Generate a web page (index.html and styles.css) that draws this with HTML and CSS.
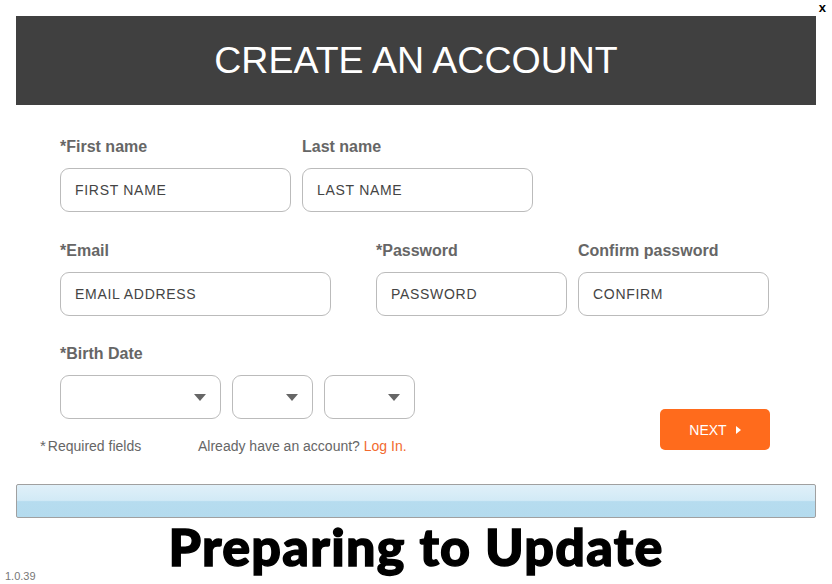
FILE: index.html
```html
<!DOCTYPE html>
<html lang="en">
  <head>
    <meta charset="UTF-8" />
    <title>Create an account</title>
    <link rel="stylesheet" href="styles.css">
  </head>
  <body>
    <div class="topbar"><span class="close">x</span></div>
    <header class="header">
      <h1>CREATE AN ACCOUNT</h1>
    </header>

    <div class="form">
      <div class="row">
        <div class="field w231">
          <label><span class="star">*</span>First name</label>
          <input type="text" placeholder="FIRST NAME" />
        </div>
        <div class="field w231">
          <label>Last name</label>
          <input type="text" placeholder="LAST NAME" />
        </div>
      </div>

      <div class="row row-tight">
        <div class="field w271 gap-right">
          <label><span class="star">*</span>Email</label>
          <input type="text" placeholder="EMAIL ADDRESS" />
        </div>
        <div class="field w191">
          <label><span class="star">*</span>Password</label>
          <input type="password" placeholder="PASSWORD" />
        </div>
        <div class="field w191">
          <label>Confirm password</label>
          <input type="password" placeholder="CONFIRM" />
        </div>
      </div>

      <div class="bottom">
        <div class="left">
          <div class="field">
            <label><span class="star">*</span>Birth Date</label>
            <div class="selects">
              <div class="select w161"><span class="arrow"></span></div>
              <div class="select w81"><span class="arrow"></span></div>
              <div class="select w91"><span class="arrow"></span></div>
            </div>
          </div>
          <div class="notes">
            <span class="required"><span class="star">*</span>Required fields</span>
            <span>Already have an account? <a href="#" class="login">Log In.</a></span>
          </div>
        </div>
        <button class="next">NEXT <span class="next-arrow"></span></button>
      </div>
    </div>

    <div class="progress"></div>

    <div class="status">
      <span class="version">1.0.39</span>
      <h2>Preparing to Update</h2>
      <span></span>
    </div>
  </body>
</html>
```

FILE: styles.css
```css
body {
  margin: 0;
  width: 832px;
  height: 584px;
  background-color: #fff;
  font-family: "Liberation Sans", Arial, sans-serif;
  overflow: hidden;
}
.topbar {
  height: 16px;
  display: flex;
  justify-content: flex-end;
  padding-right: 6px;
}
.close {
  font-weight: bold;
  font-size: 13px;
  line-height: 16px;
  color: #000;
}
.header {
  margin: 0 16px;
  height: 89px;
  background-color: #404040;
  display: flex;
  align-items: center;
  justify-content: center;
}
.header h1 {
  margin: 0;
  color: #fff;
  font-weight: normal;
  font-size: 37.5px;
  padding-bottom: 1px;
}

.form {
  padding: 32px 0 0 60px;
  width: 710px;
}
.row {
  display: flex;
  gap: 11px;
  margin-bottom: 29px;
}
.row-tight {
  margin-bottom: 28px;
}
.field {
  display: flex;
  flex-direction: column;
}
.field label {
  font-size: 16px;
  font-weight: bold;
  color: #666;
  line-height: 20px;
  margin-bottom: 11px;
}
.star {
  color: #666;
}
.field input {
  box-sizing: border-box;
  height: 44px;
  border: 1px solid #bbb;
  border-radius: 9px;
  padding: 0 14px;
  font-family: "Liberation Sans", Arial, sans-serif;
  font-size: 14px;
  letter-spacing: 0.7px;
  color: #444;
  outline: none;
}
.field input::placeholder {
  color: #444;
  opacity: 1;
}
.w231 { width: 231px; }
.w271 { width: 271px; }
.w191 { width: 191px; }
.w161 { width: 161px; }
.w81 { width: 81px; }
.w91 { width: 91px; }
.gap-right {
  margin-right: 34px;
}

.bottom {
  display: flex;
  justify-content: space-between;
  align-items: flex-end;
}
.selects {
  display: flex;
  gap: 11px;
}
.select {
  box-sizing: border-box;
  height: 44px;
  border: 1px solid #bbb;
  border-radius: 9px;
  display: flex;
  align-items: center;
  justify-content: flex-end;
  padding-right: 14px;
}
.arrow {
  width: 0;
  height: 0;
  border-left: 6px solid transparent;
  border-right: 6px solid transparent;
  border-top: 7px solid #666;
}
.notes {
  margin: 19px 0 0 -20px;
  font-size: 14px;
  line-height: 16px;
  color: #666;
  display: flex;
}
.notes .star {
  margin-right: 2px;
  font-size: 15px;
}
.required {
  width: 158px;
}
.login {
  color: #f26a2e;
  text-decoration: none;
}
.next {
  width: 110px;
  height: 41px;
  margin-bottom: 4px;
  border: none;
  border-radius: 5px;
  background-color: #ff6b1c;
  color: #fff;
  font-family: "Liberation Sans", Arial, sans-serif;
  font-size: 14px;
  display: flex;
  align-items: center;
  justify-content: center;
  gap: 9px;
  padding: 0;
}
.next-arrow {
  width: 0;
  height: 0;
  border-top: 4.5px solid transparent;
  border-bottom: 4.5px solid transparent;
  border-left: 5px solid #fff;
}

.progress {
  margin: 30px 16px 0;
  height: 32px;
  border: 1px solid #a0a0a0;
  border-radius: 2px;
  background: linear-gradient(#e0f0f9 0%, #d2eaf6 48%, #b6dcef 52%, #b4dbee 100%);
}

.status {
  display: grid;
  grid-template-columns: 1fr auto 1fr;
  align-items: start;
  height: 66px;
}
.status h2 {
  margin: 0;
  font-family: Lato, sans-serif;
  font-weight: 900;
  font-size: 52px;
  letter-spacing: 1.3px;
  -webkit-text-stroke: 1.4px #000;
  line-height: 56px;
  color: #000;
}
.version {
  align-self: end;
  font-size: 11px;
  color: #777;
  padding: 0 0 2px 5px;
}
```
